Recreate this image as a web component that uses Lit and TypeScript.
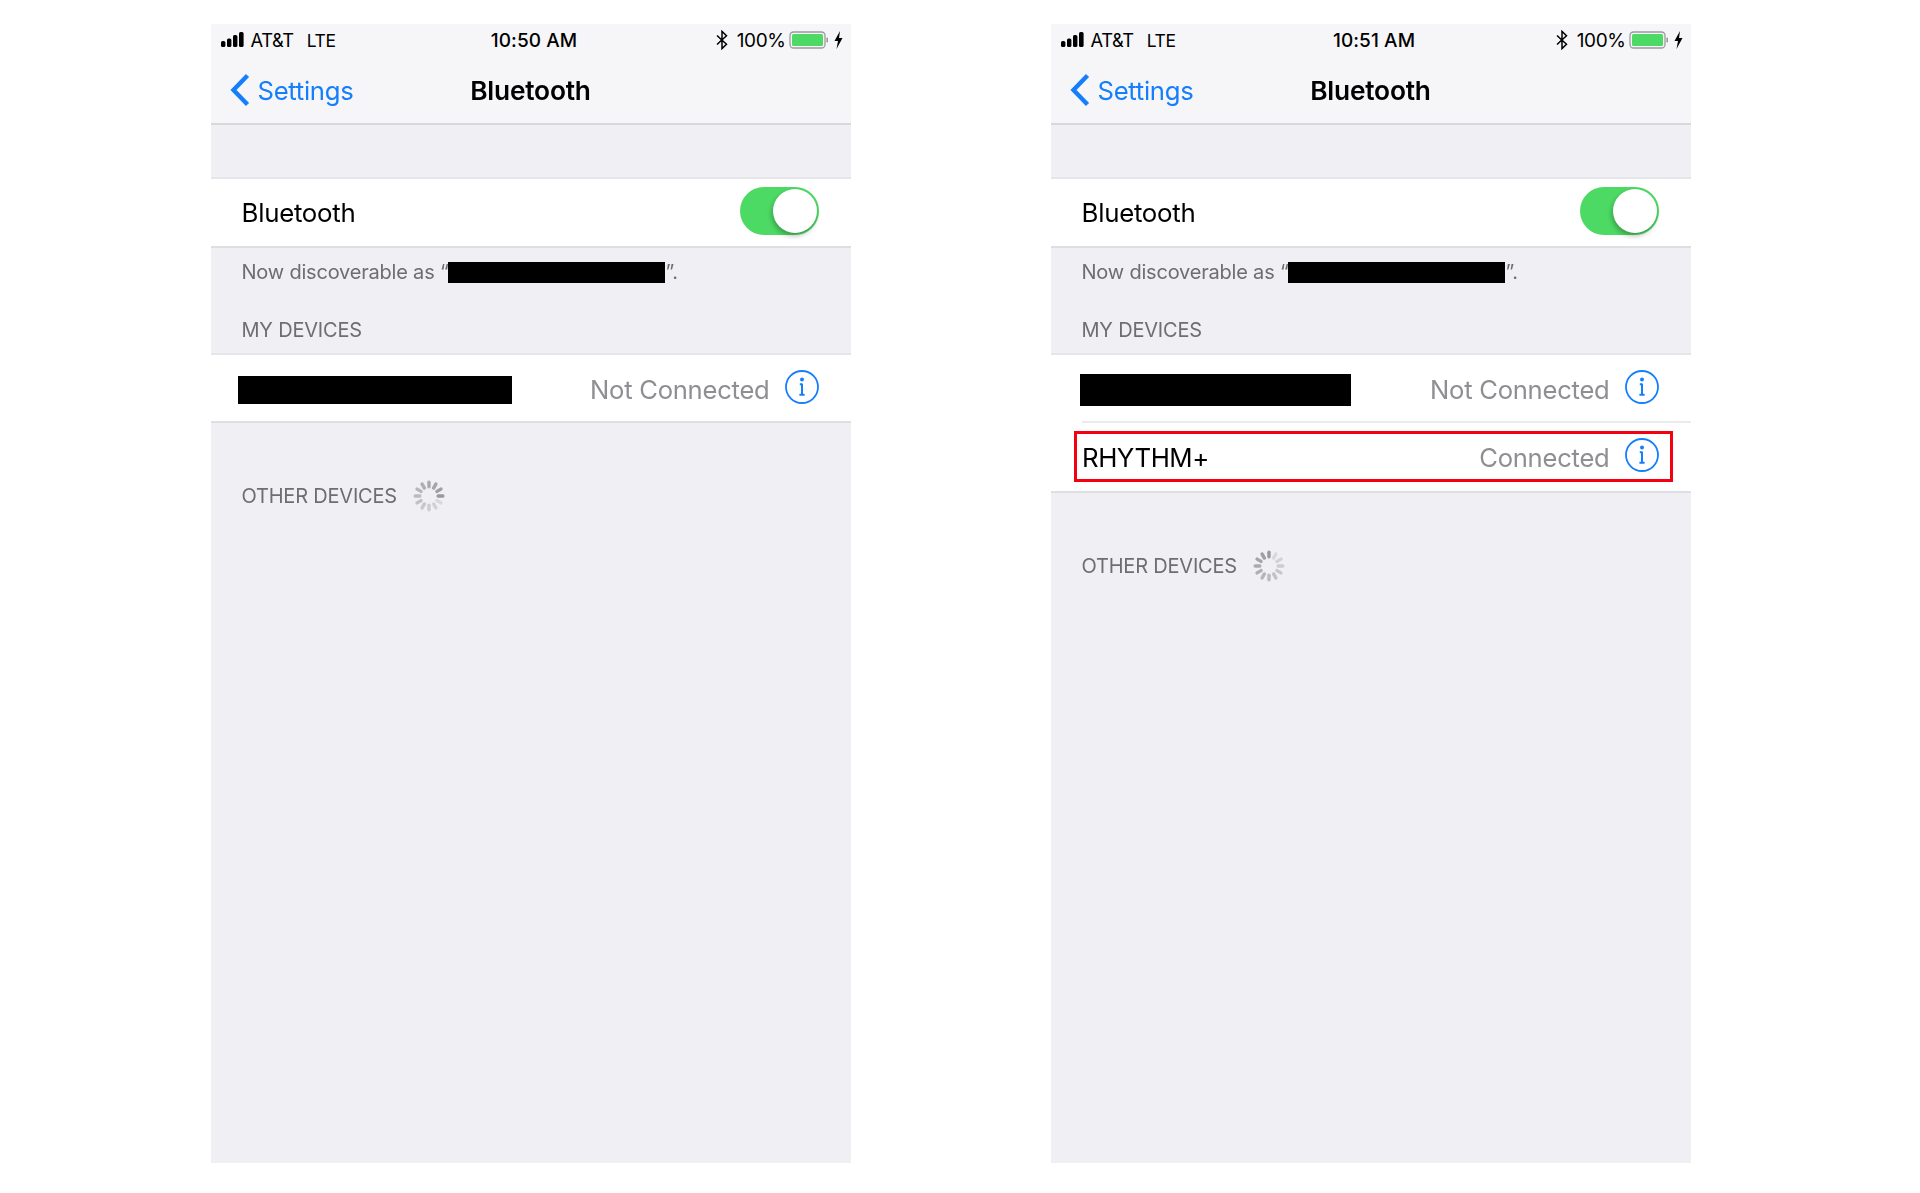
import { LitElement, html, css, svg } from "lit";
import { customElement, property } from "lit/decorators.js";

interface Device {
  name?: string;
  redactWidth?: number;
  redactHeight?: number;
  redactOffset?: number;
  status: string;
  highlighted?: boolean;
}

const spinnerBars = Array.from({ length: 12 }, (_, i) => i);

@customElement("phone-screen")
class PhoneScreen extends LitElement {
  @property() time = "";
  @property({ type: Number }) nameWidth = 217;
  @property({ type: Number }) spinStart = 3;
  @property({ attribute: false }) devices: Device[] = [];

  static styles = css`
    :host {
      display: flex;
      flex-direction: column;
      width: 640px;
      height: 1139px;
      background: #efeff4;
      font-family: Inter, Roboto, "Liberation Sans", sans-serif;
      color: #000;
      filter: blur(0.35px);
    }
    .top {
      background: #f6f6f8;
      border-bottom: 2px solid #d9d9dc;
      height: 101px;
      box-sizing: border-box;
      flex: none;
    }
    .status {
      display: grid;
      grid-template-columns: 1fr auto 1fr;
      align-items: center;
      height: 32px;
      padding: 0 8px 0 10px;
      font-size: 18.3px;
      letter-spacing: -0.4px;
    }
    .status-l, .status-r {
      display: flex;
      align-items: center;
    }
    .status-r { justify-content: flex-end; }
    .carrier { margin-left: 4px; }
    .lte { margin-left: 13px; font-size: 17.5px; }
    .time { font-weight: 500; letter-spacing: 0.1px; font-size: 19px; margin-left: 5px; }
    .pct { margin: 0 3px 0 9px; font-size: 19px; }
    .battery { margin-right: 5px; }
    .nav {
      display: grid;
      grid-template-columns: 1fr auto 1fr;
      align-items: center;
      height: 66px;
      padding-top: 2px;
      box-sizing: border-box;
    }
    .back {
      display: flex;
      align-items: center;
      gap: 8px;
      padding-left: 19px;
      color: #157efb;
      font-size: 25.7px;
      letter-spacing: -0.3px;
    }
    .title { font-size: 26.3px; font-weight: 600; letter-spacing: -0.2px; }
    .spacer { height: 52px; flex: none; }
    .group {
      background: #fff;
      border-top: 2px solid #e6e6ea;
      border-bottom: 2px solid #dfdfe3;
      flex: none;
    }
    .switch-row {
      display: flex;
      justify-content: space-between;
      align-items: center;
      height: 67px;
      padding: 0 31px;
      font-size: 25.8px;
      letter-spacing: -0.25px;
    }
    .toggle {
      display: flex;
      justify-content: flex-end;
      align-items: center;
      box-sizing: border-box;
      width: 79px;
      height: 48px;
      margin-top: -3px;
      margin-right: 1px;
      padding-right: 2px;
      border-radius: 24px;
      background: #4cd964;
    }
    .knob {
      width: 44px;
      height: 44px;
      border-radius: 50%;
      background: #fff;
      box-shadow: -1px 3px 5px rgba(0, 0, 0, 0.28);
    }
    .hint {
      display: flex;
      align-items: center;
      box-sizing: border-box;
      height: 47px;
      padding: 1px 0 0 31px;
      font-size: 20px;
      color: #6d6d72;
      letter-spacing: -0.2px;
      flex: none;
    }
    .bar {
      display: inline-block;
      background: #000;
      flex: none;
    }
    .hint .bar { height: 21px; margin: 0 1px 0 -1px; }
    .header {
      display: flex;
      align-items: center;
      padding-left: 31px;
      font-size: 20px;
      color: #6d6d72;
      letter-spacing: -0.2px;
      flex: none;
    }
    .my { height: 58px; padding-top: 12px; box-sizing: border-box; }
    .other { height: 60px; margin-top: 43px; gap: 15px; }
    .row {
      position: relative;
      display: flex;
      align-items: center;
      justify-content: space-between;
      height: 66px;
      padding: 0 32px 0 31px;
      font-size: 25.8px;
      letter-spacing: -0.25px;
    }
    .row + .row { height: 70px; }
    .row + .row::before {
      content: "";
      position: absolute;
      top: 0;
      left: 31px;
      right: 0;
      height: 2px;
      background: #ebebee;
    }
    .row .bar { margin-top: 3px; }
    .name { margin: 3px 0 0 0.5px; letter-spacing: -0.45px; }
    .right {
      display: flex;
      align-items: center;
      gap: 15px;
    }
    .right svg { margin-top: -2px; }
    .state { color: #8e8e93; margin-top: 3px; font-size: 25.6px; }
    .highlight {
      position: absolute;
      inset: 10px 18px 9px 23px;
      border: 3px solid #f6000f;
    }
  `;

  private signal() {
    return html`<svg width="26" height="16" viewBox="0 0 26 16">
      <rect x="0" y="9" width="4.4" height="6" rx="1.6" fill="#000" />
      <rect x="6" y="6.5" width="4.4" height="8.5" rx="1.6" fill="#000" />
      <rect x="12" y="3" width="4.4" height="12" rx="1.6" fill="#000" />
      <rect x="18" y="0" width="4.6" height="15" rx="1.6" fill="#000" />
    </svg>`;
  }

  private btIcon() {
    return html`<svg width="12" height="20" viewBox="0 0 12 20">
      <path d="M1 5.5 L10.5 14.2 L6 18.6 V1.4 L10.5 5.8 L1 14.5" fill="none" stroke="#000" stroke-width="1.5" />
    </svg>`;
  }

  private battery() {
    return html`<svg class="battery" width="40" height="18" viewBox="0 0 40 18">
      <rect x="1" y="1" width="35" height="16" rx="3.5" fill="none" stroke="#9a9a9c" stroke-width="1.3" />
      <rect x="3" y="3" width="31" height="12" rx="1.5" fill="#4cd964" />
      <rect x="37.4" y="6.5" width="1.6" height="5" rx="0.8" fill="#9a9a9c" />
    </svg>`;
  }

  private bolt() {
    return html`<svg width="9" height="18" viewBox="0 0 9 18">
      <path d="M6 0 L0.5 10 H4 L2.5 18 L8.5 7 H5 Z" fill="#000" />
    </svg>`;
  }

  private chevron() {
    return html`<svg width="20" height="34" viewBox="0 0 20 34">
      <path d="M17.5 2.5 L3.5 17 L17.5 31.5" fill="none" stroke="#157efb" stroke-width="4.4" />
    </svg>`;
  }

  private info() {
    return html`<svg width="34" height="34" viewBox="0 0 34 34">
      <circle cx="17" cy="17" r="16" fill="none" stroke="#157efb" stroke-width="1.8" />
      <circle cx="17" cy="9.6" r="2" fill="#157efb" />
      <path d="M17 14 V24.6 M14.8 14.2 H17.6 M14.4 24.8 H19.6" fill="none" stroke="#157efb" stroke-width="2" />
    </svg>`;
  }

  private spinner() {
    return html`<svg width="34" height="34" viewBox="-17 -17 34 34">
      ${spinnerBars.map((i) => {
        const age = (this.spinStart - i + 12) % 12;
        const opacity = 0.72 - (age / 12) * 0.58;
        return svg`<rect x="-1.7" y="-15.5" width="3.4" height="8" rx="1.7" fill="#77777b"
          opacity=${opacity.toFixed(2)} transform=${`rotate(${i * 30})`} />`;
      })}
    </svg>`;
  }

  render() {
    return html`
      <div class="top">
        <div class="status">
          <div class="status-l">
            ${this.signal()}<span class="carrier">AT&amp;T</span><span class="lte">LTE</span>
          </div>
          <div class="time">${this.time}</div>
          <div class="status-r">
            ${this.btIcon()}<span class="pct">100%</span>${this.battery()}${this.bolt()}
          </div>
        </div>
        <div class="nav">
          <div class="back">${this.chevron()}<span>Settings</span></div>
          <div class="title">Bluetooth</div>
        </div>
      </div>
      <div class="spacer"></div>
      <div class="group">
        <div class="switch-row">
          <span>Bluetooth</span>
          <div class="toggle"><div class="knob"></div></div>
        </div>
      </div>
      <div class="hint">
        Now discoverable as “<span class="bar" style="width:${this.nameWidth}px"></span>”.
      </div>
      <div class="header my">MY DEVICES</div>
      <div class="group">
        ${this.devices.map(
          (d) => html`<div class="row">
            ${d.name
              ? html`<span class="name">${d.name}</span>`
              : html`<span
                  class="bar"
                  style="width:${d.redactWidth}px;height:${d.redactHeight}px;margin-left:${d.redactOffset}px"
                ></span>`}
            <div class="right"><span class="state">${d.status}</span>${this.info()}</div>
            ${d.highlighted ? html`<div class="highlight"></div>` : ""}
          </div>`
        )}
      </div>
      <div class="header other">OTHER DEVICES ${this.spinner()}</div>
    `;
  }
}

@customElement("app-root")
export class AppRoot extends LitElement {
  static styles = css`
    :host {
      display: flex;
      gap: 200px;
      box-sizing: border-box;
      width: 1920px;
      height: 1193px;
      padding: 24px 0 0 210.5px;
      background: #fff;
      overflow: hidden;
    }
  `;

  render() {
    return html`
      <phone-screen
        time="10:50 AM"
        .spinStart=${3}
        .devices=${[{ redactWidth: 274, redactHeight: 28, redactOffset: -4, status: "Not Connected" }]}
      ></phone-screen>
      <phone-screen
        time="10:51 AM"
        .spinStart=${0}
        .devices=${[
          { redactWidth: 271, redactHeight: 32, redactOffset: -2, status: "Not Connected" },
          { name: "RHYTHM+", status: "Connected", highlighted: true },
        ]}
      ></phone-screen>
    `;
  }
}
export { PhoneScreen };
